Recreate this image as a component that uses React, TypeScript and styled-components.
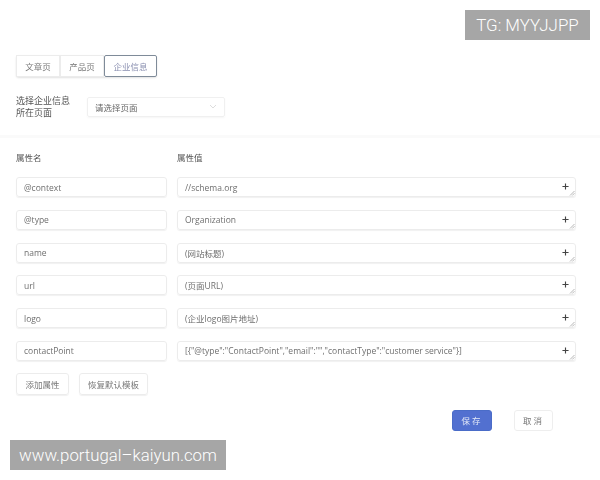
import React from 'react';
import styled, { createGlobalStyle } from 'styled-components';

const Global = createGlobalStyle`
  html, body {
    margin: 0;
    padding: 0;
    background: #fff;
  }
  body {
    width: 600px;
    height: 480px;
    overflow: hidden;
    font-family: "Open Sans", "Noto Sans CJK SC", sans-serif;
  }
`;

const Page = styled.div`
  position: relative;
  width: 600px;
  height: 480px;
  overflow: hidden;
`;

const Form = styled.div`
  display: flex;
  flex-direction: column;
  padding: 55px 24px 0 16px;
  filter: blur(0.4px);
  color: #666;
  font-size: 8.5px;
`;

const Tabs = styled.div`
  display: flex;
  width: max-content;
  height: 22px;
  border-radius: 3px;
  box-shadow: 0 1px 2px rgba(0, 0, 0, 0.12);
`;

const Tab = styled.div<{ $active?: boolean; $width: number }>`
  display: flex;
  align-items: center;
  justify-content: center;
  box-sizing: border-box;
  width: ${(p) => p.$width}px;
  color: ${(p) => (p.$active ? '#8a8fb0' : '#777')};
  border: 1px solid ${(p) => (p.$active ? '#7f8b99' : '#ececec')};
  border-radius: ${(p) => (p.$active ? '2px' : '0')};
`;

const SelectRow = styled.div`
  display: flex;
  align-items: center;
  margin-top: 19px;
  height: 21px;
`;

const SelectLabel = styled.div`
  width: 71px;
  font-size: 9px;
  line-height: 12px;
  color: #555;
`;

const Select = styled.div`
  display: flex;
  align-items: center;
  justify-content: space-between;
  box-sizing: border-box;
  width: 138px;
  height: 20px;
  padding: 0 7px;
  border: 1px solid #f0f0f0;
  border-radius: 2px;
  color: #666;
  box-shadow: 0 1px 2px rgba(0, 0, 0, 0.04);
`;

const Divider = styled.div`
  height: 3px;
  margin: 18px -24px 0 -16px;
  background: #fafafa;
`;

const Headers = styled.div`
  display: grid;
  grid-template-columns: 151px 399px;
  column-gap: 10px;
  margin-top: 14px;
  line-height: 12px;
  color: #555;
`;

const Rows = styled.div`
  display: grid;
  grid-template-columns: 151px 399px;
  column-gap: 10px;
  row-gap: 12.8px;
  margin-top: 13px;
`;

const Field = styled.div`
  position: relative;
  display: flex;
  align-items: center;
  box-sizing: border-box;
  height: 20px;
  padding: 0 7px;
  border: 1px solid #ececec;
  border-radius: 3px;
  box-shadow: 0 1px 1px rgba(0, 0, 0, 0.06);
  color: #6f6f6f;
  white-space: nowrap;
`;

const Plus = styled.svg`
  position: absolute;
  right: 6px;
  top: 5px;
  width: 7px;
  height: 7px;
`;

const Grip = styled.svg`
  position: absolute;
  right: 0;
  bottom: 0;
  width: 6px;
  height: 6px;
`;

const ActionRow = styled.div`
  display: flex;
  gap: 10px;
  margin-top: 12px;
`;

const Action = styled.div<{ $width: number }>`
  display: flex;
  align-items: center;
  justify-content: center;
  box-sizing: border-box;
  width: ${(p) => p.$width}px;
  height: 22px;
  border: 1px solid #ececec;
  border-radius: 3px;
  box-shadow: 0 1px 1px rgba(0, 0, 0, 0.06);
  color: #777;
`;

const Footer = styled.div`
  display: flex;
  justify-content: flex-end;
  gap: 22px;
  margin-top: 15px;
  padding-right: 23px;
`;

const FooterButton = styled.div<{ $primary?: boolean }>`
  display: flex;
  align-items: center;
  justify-content: center;
  box-sizing: border-box;
  width: ${(p) => (p.$primary ? 40 : 39)}px;
  height: 21px;
  border-radius: 3px;
  letter-spacing: 2px;
  border: 1px solid ${(p) => (p.$primary ? '#4a6cc8' : '#eeeeee')};
  background: ${(p) => (p.$primary ? '#5270d0' : '#fff')};
  color: ${(p) => (p.$primary ? '#e4e9f8' : '#777')};
`;

const Watermark = styled.div<{ $corner: 'top' | 'bottom' }>`
  position: absolute;
  display: flex;
  align-items: center;
  justify-content: center;
  height: 30px;
  background: #a6a6a6;
  color: #fff;
  font-family: Roboto, "Liberation Sans", sans-serif;
  font-weight: 300;
  white-space: nowrap;
  ${(p) =>
    p.$corner === 'top'
      ? 'top: 10px; right: 10px; width: 125px; font-size: 16.9px;'
      : 'bottom: 10px; left: 10px; width: 216px; font-size: 16.8px;'}
`;

const rows = [
  ['@context', '//schema.org'],
  ['@type', 'Organization'],
  ['name', '(网站标题)'],
  ['url', '(页面URL)'],
  ['logo', '(企业logo图片地址)'],
  ['contactPoint', '[{"@type":"ContactPoint","email":"","contactType":"customer service"}]'],
];

const App = (): JSX.Element => (
  <Page>
    <Global />
    <Form>
      <Tabs>
        <Tab $width={44}>文章页</Tab>
        <Tab $width={44}>产品页</Tab>
        <Tab $width={53} $active>
          企业信息
        </Tab>
      </Tabs>
      <SelectRow>
        <SelectLabel>
          选择企业信息
          <br />
          所在页面
        </SelectLabel>
        <Select>
          请选择页面
          <svg width="8" height="6" viewBox="0 0 8 6" fill="none" stroke="#ddd" strokeWidth="1">
            <path d="M1 1l3 3 3-3" />
          </svg>
        </Select>
      </SelectRow>
      <Divider />
      <Headers>
        <div>属性名</div>
        <div>属性值</div>
      </Headers>
      <Rows>
        {rows.map(([name, value]) => (
          <React.Fragment key={name}>
            <Field>{name}</Field>
            <Field>
              {value}
              <Plus viewBox="0 0 8 8" stroke="#444" strokeWidth="1.3">
                <path d="M4 0.5v7M0.5 4h7" />
              </Plus>
              <Grip viewBox="0 0 6 6" stroke="#888" strokeWidth="0.6">
                <path d="M1 5.5L5.5 1M3.2 5.5L5.5 3.2" />
              </Grip>
            </Field>
          </React.Fragment>
        ))}
      </Rows>
      <ActionRow>
        <Action $width={53}>添加属性</Action>
        <Action $width={69}>恢复默认模板</Action>
      </ActionRow>
      <Footer>
        <FooterButton $primary>保存</FooterButton>
        <FooterButton>取消</FooterButton>
      </Footer>
    </Form>
    <Watermark $corner="top">TG: MYYJJPP</Watermark>
    <Watermark $corner="bottom">www.portugal–kaiyun.com</Watermark>
  </Page>
);

export default App;
